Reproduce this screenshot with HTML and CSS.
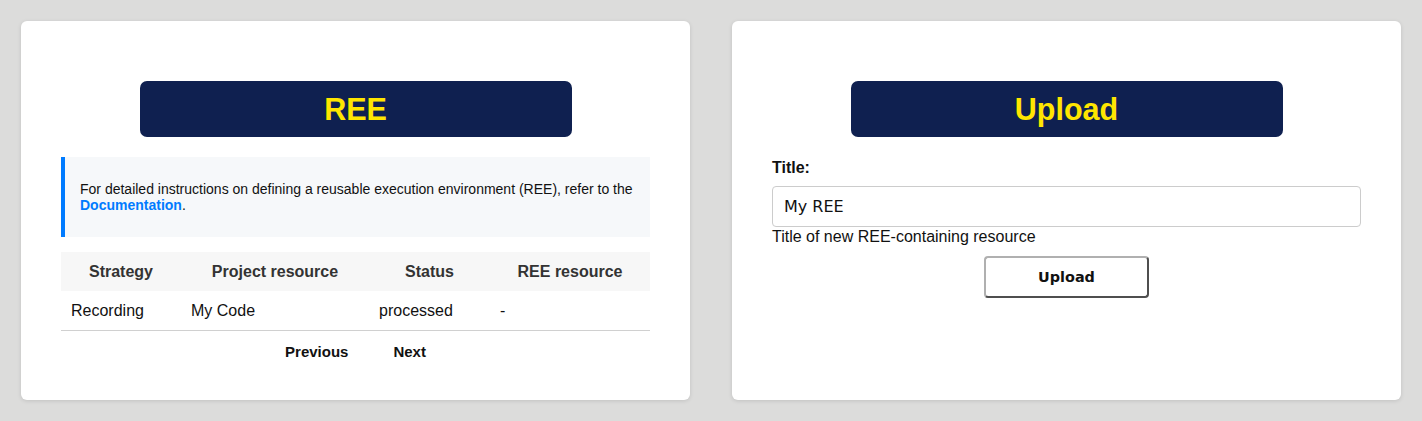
FILE: index.html
```html
<!DOCTYPE html>
<html lang="en">
<head>
<meta charset="utf-8">
<title>REE</title>
<link rel="stylesheet" href="styles.css">
</head>
<body>
<div class="page">
  <section class="card">
    <h1 class="banner">REE</h1>
    <div class="info">
      For detailed instructions on defining a reusable execution environment (REE), refer to the <a href="#" class="doc-link">Documentation</a>.
    </div>
    <table class="ree-table">
      <colgroup>
        <col class="c1"><col class="c2"><col class="c3"><col class="c4">
      </colgroup>
      <thead>
        <tr><th>Strategy</th><th>Project resource</th><th>Status</th><th>REE resource</th></tr>
      </thead>
      <tbody>
        <tr><td>Recording</td><td>My Code</td><td>processed</td><td>-</td></tr>
      </tbody>
    </table>
    <div class="pager">
      <span class="pager-btn">Previous</span>
      <span class="pager-btn">Next</span>
    </div>
  </section>
  <section class="card">
    <h1 class="banner">Upload</h1>
    <label class="field-label" for="title">Title:</label>
    <input id="title" class="field-input" type="text" value="My REE">
    <div class="field-help">Title of new REE-containing resource</div>
    <div class="actions">
      <button class="upload-btn" type="button">Upload</button>
    </div>
  </section>
</div>
</body>
</html>
```

FILE: styles.css
```css
html, body {
  margin: 0;
  padding: 0;
  background: #dcdcdb;
  font-family: "Liberation Sans", Arial, sans-serif;
  color: #111;
}

.page {
  display: grid;
  grid-template-columns: 1fr 1fr;
  gap: 42px;
  padding: 21px;
}

.card {
  background: #fff;
  border-radius: 6px;
  box-shadow: 0 1px 4px rgba(0, 0, 0, 0.12);
  padding: 40px 40px 40px;
  display: flex;
  flex-direction: column;
  height: 379px;
  box-sizing: border-box;
}

.banner {
  align-self: center;
  width: 432px;
  height: 56px;
  margin: 20px 0 0;
  background: #0f2050;
  color: #ffe600;
  border-radius: 7px;
  font-size: 30.5px;
  font-weight: bold;
  line-height: 56px;
  text-align: center;
}

.info {
  margin-top: 20px;
  background: #f6f8fa;
  border-left: 4px solid #007bff;
  padding: 24px 15px;
  font-size: 14px;
  line-height: 16px;
  color: #111;
}

.doc-link {
  color: #007bff;
  font-weight: bold;
  text-decoration: none;
}

.ree-table {
  margin-top: 15px;
  width: 100%;
  border-collapse: collapse;
  table-layout: fixed;
  font-size: 16px;
}

.c1 { width: 120px; }
.c2 { width: 188px; }
.c3 { width: 121px; }
.c4 { width: 160px; }

.ree-table th {
  background: #f7f7f7;
  color: #333;
  font-weight: bold;
  text-align: center;
  padding: 10px 10px;
  line-height: 19px;
}

.ree-table td {
  text-align: left;
  padding: 10px 10px;
  line-height: 19px;
  border-bottom: 1px solid #d0d0d0;
  color: #111;
}

.pager {
  display: flex;
  justify-content: center;
  gap: 45px;
  padding-top: 12px;
  font-size: 15px;
  line-height: 18px;
  font-weight: bold;
  color: #111;
}

.field-label {
  margin-top: 22px;
  font-weight: bold;
  font-size: 16px;
  line-height: 18px;
  color: #111;
}

.field-input {
  margin-top: 9px;
  box-sizing: border-box;
  width: 100%;
  height: 41px;
  border: 1px solid #cccccc;
  border-radius: 4px;
  padding: 0 11px;
  font-family: "DejaVu Sans", sans-serif;
  font-size: 16px;
  color: #111;
  background: #fff;
  outline: none;
}

.field-help {
  font-size: 16px;
  line-height: 19px;
  color: #111;
}

.actions {
  display: flex;
  justify-content: center;
  margin-top: 10px;
}

.upload-btn {
  box-sizing: border-box;
  width: 165px;
  height: 42px;
  background: #fff;
  border-style: solid;
  border-width: 2px;
  border-color: #b0b0b0 #4f4f4f #4f4f4f #b0b0b0;
  border-radius: 4px;
  font-family: "DejaVu Sans", sans-serif;
  font-size: 14.4px;
  font-weight: bold;
  color: #111;
  padding: 0;
}
```
